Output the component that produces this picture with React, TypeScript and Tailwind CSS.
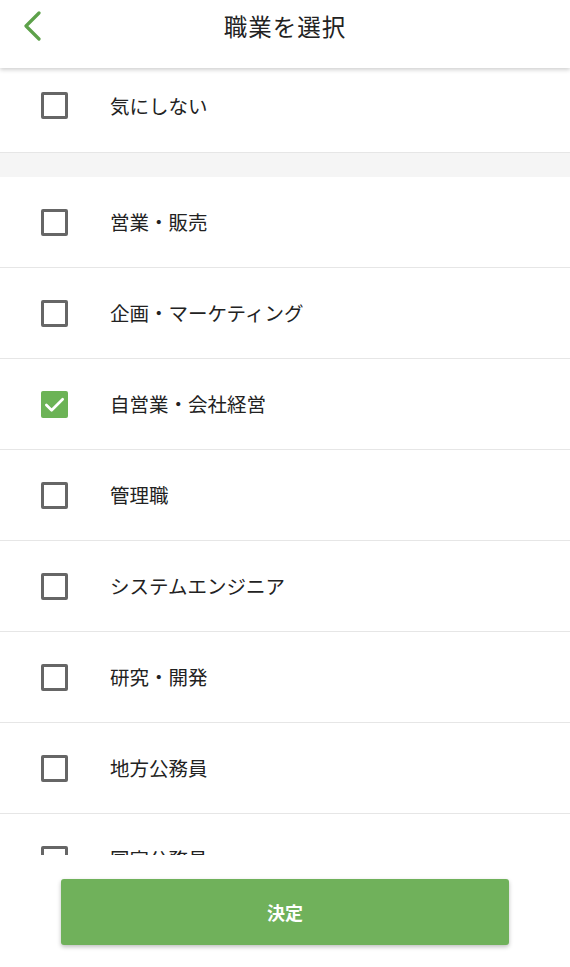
import { useState } from "react";

const JOBS = [
  "営業・販売",
  "企画・マーケティング",
  "自営業・会社経営",
  "管理職",
  "システムエンジニア",
  "研究・開発",
  "地方公務員",
  "国家公務員",
  "医師",
  "弁護士",
];

function Checkbox({ checked }: { checked: boolean }) {
  if (checked) {
    return (
      <span className="flex h-[27px] w-[27px] shrink-0 items-center justify-center rounded-[2px] bg-[#6cb356]">
        <svg width="23" height="23" viewBox="0 0 24 24" fill="none">
          <path d="M3.5 12.5l5.5 5.5L20.5 6.5" stroke="#fff" strokeWidth="2.8" strokeLinecap="round" strokeLinejoin="round" />
        </svg>
      </span>
    );
  }
  return <span className="h-[27px] w-[27px] shrink-0 rounded-[2px] border-[3px] border-[#666]" />;
}

function Row({ label, checked, onClick, first }: { label: string; checked: boolean; onClick: () => void; first?: boolean }) {
  return (
    <button
      onClick={onClick}
      className={`flex w-full items-center border-b border-[#e6e6e6] bg-white pl-[41px] text-left ${first ? "h-[85px] pb-[9px]" : "h-[91px]"}`}
    >
      <Checkbox checked={checked} />
      <span className="ml-[42px] text-[19.5px] text-[#222]">{label}</span>
    </button>
  );
}

export default function App() {
  const [any, setAny] = useState(false);
  const [picked, setPicked] = useState<string[]>(["自営業・会社経営"]);

  const toggle = (job: string) =>
    setPicked((p) => (p.includes(job) ? p.filter((j) => j !== job) : [...p, job]));

  return (
    <div
      className="flex h-[967px] w-[570px] flex-col bg-white"
      style={{ fontFamily: '"Noto Sans CJK JP", "Noto Sans", sans-serif' }}
    >
      <header className="relative z-10 flex h-[68px] shrink-0 items-start bg-white shadow-[0_2px_4px_rgba(0,0,0,0.18)]">
        <div className="relative flex h-[54px] w-full items-center justify-center">
          <button className="absolute left-[22px] top-[11px]">
            <svg width="22" height="30" viewBox="0 0 22 30" fill="none">
              <path d="M17 2L4 15l13 13" stroke="#5da14a" strokeWidth="3.2" strokeLinecap="round" strokeLinejoin="round" />
            </svg>
          </button>
          <h1 className="text-[23.5px] font-normal tracking-[1px] text-[#222]">職業を選択</h1>
        </div>
      </header>

      <div className="min-h-0 flex-1 overflow-hidden">
        <Row label="気にしない" checked={any} onClick={() => setAny(!any)} first />
        <div className="h-[24px] bg-[#f5f5f5]" />
        {JOBS.map((job) => (
          <Row key={job} label={job} checked={picked.includes(job)} onClick={() => toggle(job)} />
        ))}
      </div>

      <div className="flex h-[112px] shrink-0 justify-center bg-white pt-[24px]">
        <button className="h-[66px] w-[448px] rounded-[3px] bg-[#70b15b] text-[18px] font-bold text-white shadow-[0_2px_4px_rgba(0,0,0,0.25)]">
          決定
        </button>
      </div>
    </div>
  );
}
